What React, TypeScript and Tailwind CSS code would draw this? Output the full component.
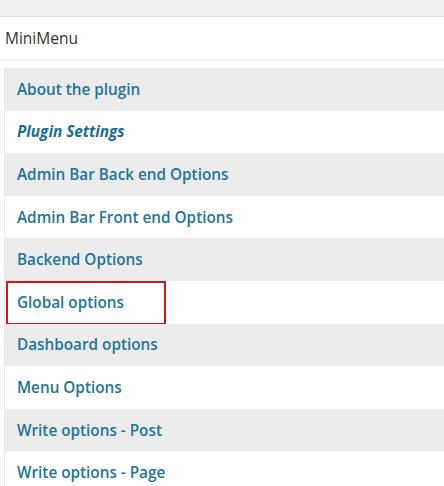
const items = [
  { label: "About the plugin" },
  { label: "Plugin Settings", current: true },
  { label: "Admin Bar Back end Options" },
  { label: "Admin Bar Front end Options" },
  { label: "Backend Options" },
  { label: "Global options", marked: true },
  { label: "Dashboard options" },
  { label: "Menu Options" },
  { label: "Write options - Post" },
  { label: "Write options - Page" },
];

const App = () => {
  return (
    <div className="h-[486px] w-[444px] overflow-hidden bg-white font-['Open_Sans',sans-serif]">
      <div className="h-[17px] border-b border-[#e4e4e4] bg-[#f0f0f0]" />
      <div className="flex h-[44px] items-center border-b-2 border-[#f1f1f1] px-[5px] pt-[2px] text-[15.5px] text-[#333]">
        MiniMenu
      </div>
      <div className="h-[7px]" />
      <ul className="ml-[4px] border-l border-[#e8e8e8]">
        {items.map((item, i) => (
          <li
            key={item.label}
            className={
              "relative flex h-[42.6px] items-center pl-[12px] text-[15.3px] font-semibold text-[#21759b] " +
              (i % 2 === 0 ? "bg-[#ececec]" : "bg-white")
            }
          >
            <span className={item.current ? "italic font-bold text-[#1a6d93]" : ""}>
              {item.label}
            </span>
            {item.marked && (
              <div className="absolute left-[1px] top-0 h-[44px] w-[160px] border-2 border-[#d3161e]" />
            )}
          </li>
        ))}
      </ul>
    </div>
  );
};

export default App;
